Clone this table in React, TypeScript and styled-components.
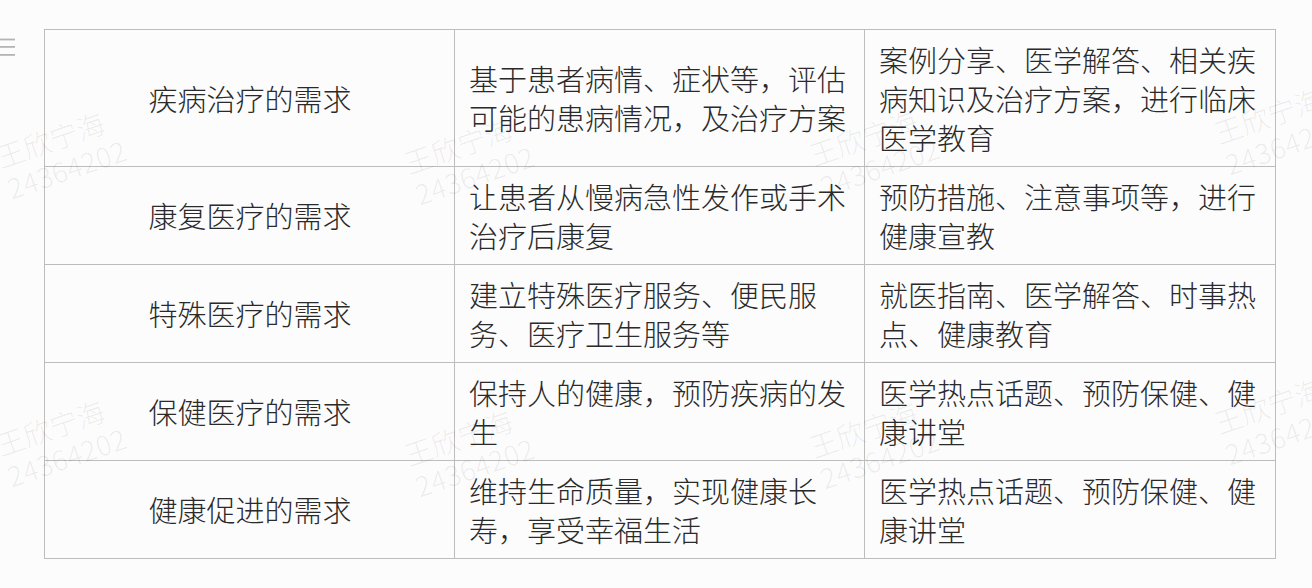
import React from "react";
import styled, { createGlobalStyle } from "styled-components";

const GlobalStyle = createGlobalStyle`
  html, body {
    margin: 0;
    padding: 0;
    background: #fcfcfd;
  }
  body {
    font-family: "Noto Sans CJK SC", "Noto Sans", sans-serif;
    color: #333333;
    overflow: hidden;
  }
`;

const Page = styled.div`
  position: relative;
  width: 1312px;
  height: 588px;
  display: flex;
  align-items: flex-start;
  padding-top: 29px;
  box-sizing: border-box;
  overflow: hidden;
`;

const Gutter = styled.div`
  width: 44px;
  flex: 0 0 44px;
  padding-top: 9px;
  display: flex;
`;

const Table = styled.table`
  border-collapse: collapse;
  table-layout: fixed;
  width: 1231px;
  background: #fcfcfd;
`;

const Cell = styled.td<{ $center?: boolean }>`
  border: 1px solid #bdbdbd;
  padding: 9.5px 13px 9.5px 14px;
  font-size: 29px;
  font-weight: 300;
  line-height: 39px;
  vertical-align: middle;
  text-align: ${(p) => (p.$center ? "center" : "left")};
  color: #2a2a2a;
  word-break: normal;
  line-break: strict;
`;

const Overlay = styled.div`
  position: absolute;
  inset: 0;
  pointer-events: none;
`;

const Watermark = styled.div`
  position: absolute;
  transform: rotate(-19deg);
  transform-origin: 0 0;
  font-family: "Noto Sans CJK SC", "Noto Sans", sans-serif;
  font-weight: 300;
  font-size: 28px;
  line-height: 33px;
  color: rgba(0, 0, 0, 0.075);
  white-space: nowrap;
`;

const WmLine = styled.div<{ $digits?: boolean }>`
  letter-spacing: ${(p) => (p.$digits ? "0.5px" : "0")};
`;

const rows: [string, string, string][] = [
  [
    "疾病治疗的需求",
    "基于患者病情、症状等，评估可能的患病情况，及治疗方案",
    "案例分享、医学解答、相关疾病知识及治疗方案，进行临床医学教育",
  ],
  [
    "康复医疗的需求",
    "让患者从慢病急性发作或手术治疗后康复",
    "预防措施、注意事项等，进行健康宣教",
  ],
  [
    "特殊医疗的需求",
    "建立特殊医疗服务、便民服务、医疗卫生服务等",
    "就医指南、医学解答、时事热点、健康教育",
  ],
  [
    "保健医疗的需求",
    "保持人的健康，预防疾病的发生",
    "医学热点话题、预防保健、健康讲堂",
  ],
  [
    "健康促进的需求",
    "维持生命质量，实现健康长寿，享受幸福生活",
    "医学热点话题、预防保健、健康讲堂",
  ],
];

const marks: { x: number; y: number }[] = [
  { x: -8, y: 142 },
  { x: 400, y: 148 },
  { x: 805, y: 140 },
  { x: 1210, y: 118 },
  { x: -8, y: 430 },
  { x: 400, y: 440 },
  { x: 805, y: 432 },
  { x: 1210, y: 408 },
];

const MenuIcon = () => (
  <svg width="16" height="20" viewBox="0 0 16 20">
    <rect x="0" y="0.6" width="15" height="1.8" fill="#b4b4b4" />
    <rect x="0" y="8" width="15" height="1.8" fill="#b4b4b4" />
    <rect x="0" y="16" width="15" height="1.8" fill="#b4b4b4" />
  </svg>
);

export default function App() {
  return (
    <>
      <GlobalStyle />
      <Page>
        <Gutter>
          <MenuIcon />
        </Gutter>
        <Table>
          <colgroup>
            <col style={{ width: 410 }} />
            <col style={{ width: 410 }} />
            <col style={{ width: 411 }} />
          </colgroup>
          <tbody>
            {rows.map((r, i) => (
              <tr key={i}>
                <Cell $center>{r[0]}</Cell>
                <Cell>{r[1]}</Cell>
                <Cell>{r[2]}</Cell>
              </tr>
            ))}
          </tbody>
        </Table>
        <Overlay>
          {marks.map((m, i) => (
            <Watermark key={i} style={{ left: m.x, top: m.y }}>
              <WmLine>王欣宁海</WmLine>
              <WmLine $digits>24364202</WmLine>
            </Watermark>
          ))}
        </Overlay>
      </Page>
    </>
  );
}
